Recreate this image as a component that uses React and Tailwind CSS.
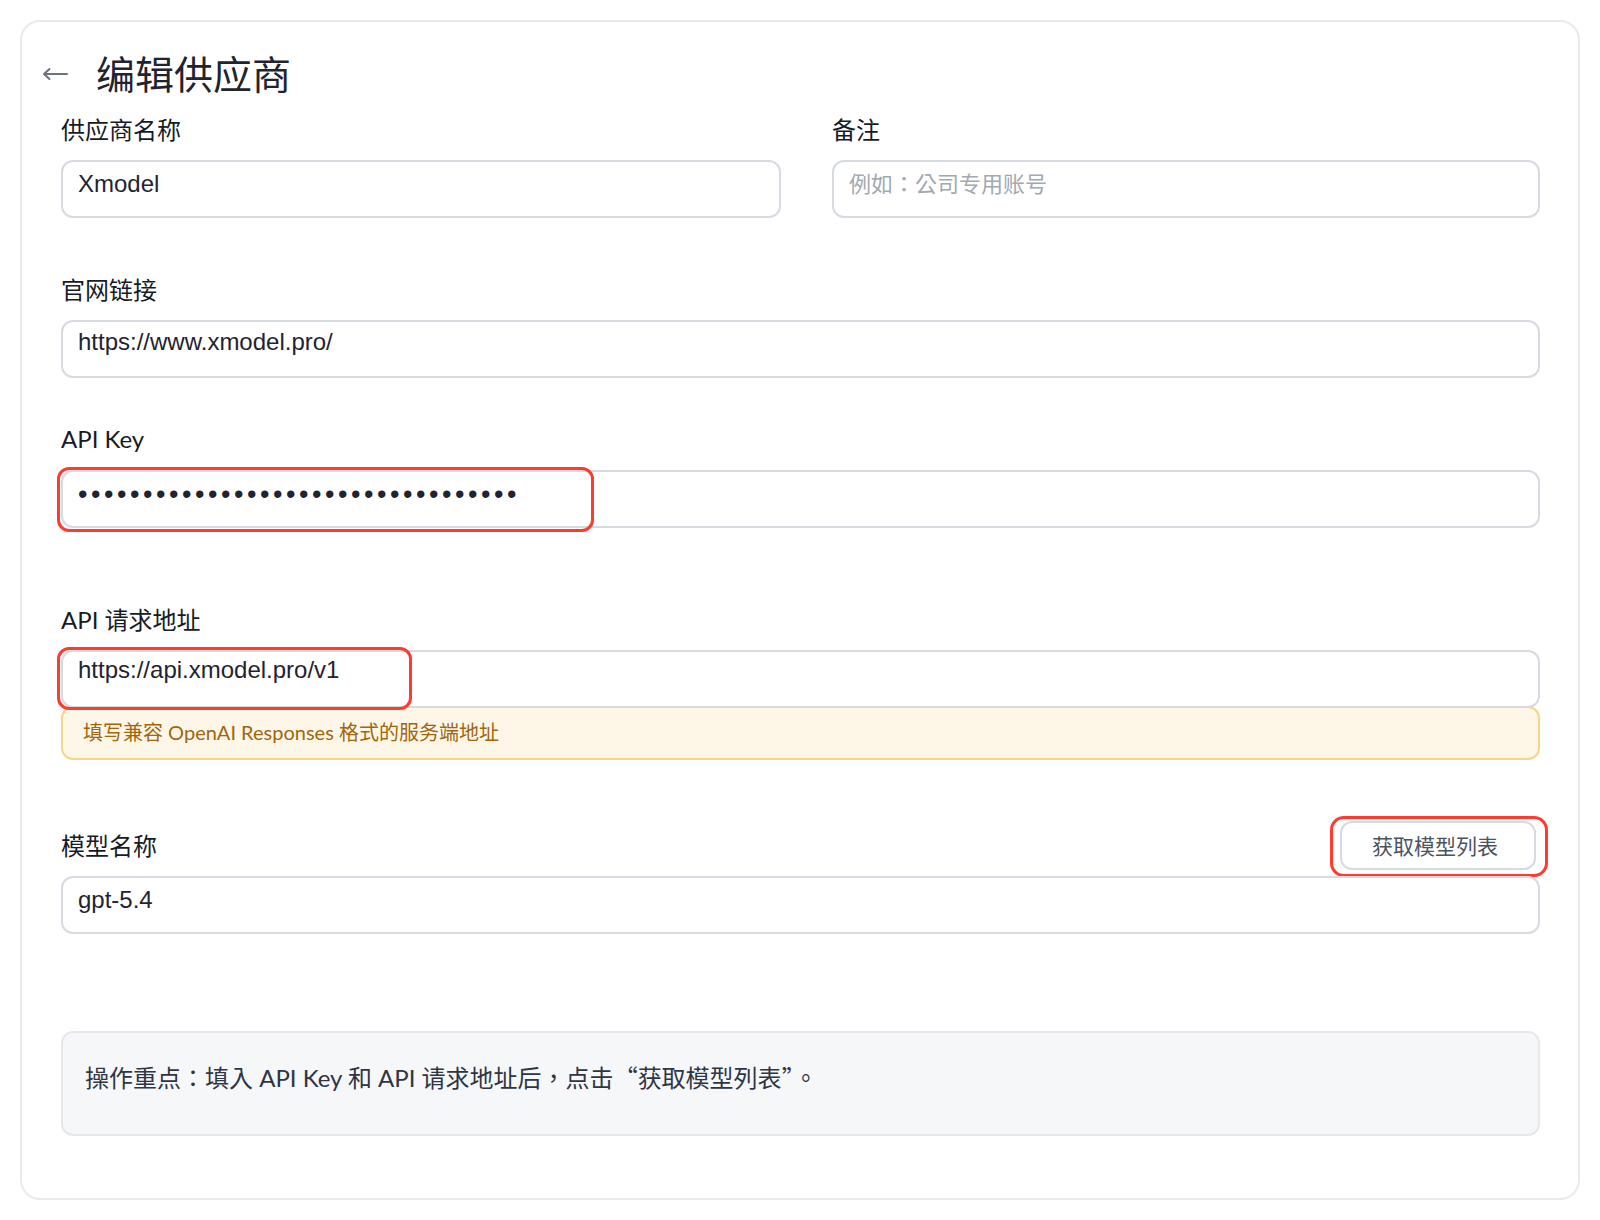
const ui = { fontFamily: 'Lato, "Noto Sans CJK SC", sans-serif' };
const uiTc = { fontFamily: 'Lato, "Noto Sans CJK TC", sans-serif' };
const cjkTc = { fontFamily: '"Noto Sans CJK TC", sans-serif' };
const mono = { fontFamily: '"Liberation Sans", "Noto Sans CJK SC", sans-serif' };

function Label({ children, className = '' }) {
    return (
        <div className={`h-8 leading-8 text-[24px] text-[#161b26] ${className}`} style={ui}>
            {children}
        </div>
    );
}

function Field({ value, placeholder, className = 'pt-[8px]', children }) {
    return (
        <div className={`relative h-[58px] rounded-[12px] border-2 border-[#d6dae1] bg-white px-[15px] ${className}`}>
            {value ? (
                <div className="text-[24px] leading-[28px] text-[#1f2430]" style={mono}>{value}</div>
            ) : (
                <div className="text-[22px] leading-[28px] text-[#a3a8b1]" style={uiTc}>{placeholder}</div>
            )}
            {children}
        </div>
    );
}

export default function App() {
    const dots = '•'.repeat(34);

    return (
        <div className="min-h-screen bg-white p-5">
            <div className="rounded-[20px] border-2 border-[#e8eaee] bg-white pt-[28px] pb-[62px]">
                {/* header */}
                <div className="flex h-12 items-center px-5">
                    <svg width="26" height="14" viewBox="0 0 26 14" className="text-[#6b7280]">
                        <path d="M25 7H2M7.5 2L2 7l5.5 5" fill="none" stroke="currentColor" strokeWidth="2" strokeLinecap="round" strokeLinejoin="round" />
                    </svg>
                    <h1 className="ml-[28px] text-[39px] leading-[48px] text-[#1f2430]" style={ui}>编辑供应商</h1>
                </div>

                <div className="pl-[39px] pr-[38px]">
                    {/* name + note */}
                    <div className="mt-[16px] grid grid-cols-[720px_1fr] gap-x-[51px]">
                        <div>
                            <Label className="mb-[14px]">供应商名称</Label>
                            <Field value="Xmodel" />
                        </div>
                        <div>
                            <Label className="mb-[14px]">备注</Label>
                            <Field placeholder="例如：公司专用账号" />
                        </div>
                    </div>

                    <Label className="mt-[56px] mb-[14px]">官网链接</Label>
                    <Field value="https://www.xmodel.pro/" className="pt-[6px]" />

                    <Label className="mt-[45px] mb-[15px]">API Key</Label>
                    <div className="relative">
                        <div className="h-[58px] rounded-[12px] border-2 border-[#d6dae1] bg-white px-[15px] pt-[7px]">
                            <div className="text-[27px] leading-[30px] tracking-[3.55px] text-[#1f2430]" style={mono}>{dots}</div>
                        </div>
                        <div className="pointer-events-none absolute -left-[4px] -top-[3px] h-[65px] w-[537px] rounded-[12px] border-[3px] border-[#ff3b30]" />
                    </div>

                    <Label className="mt-[76px] mb-[14px]">API 请求地址</Label>
                    <div className="relative">
                        <Field value="https://api.xmodel.pro/v1" className="pt-[4px]" />
                        <div className="pointer-events-none absolute -left-[4px] -top-[3px] h-[63px] w-[355px] rounded-[12px] border-[3px] border-[#ff3b30]" />
                    </div>
                    <div className="-mt-[2px] flex h-[54px] items-center rounded-[12px] border-2 border-[#f4d58c] bg-[#fef7e8] px-5 pb-[3px]">
                        <span className="text-[20px] text-[#a2650d]" style={ui}>填写兼容 OpenAI Responses 格式的服务端地址</span>
                    </div>

                    {/* model row */}
                    <div className="mt-[61px] mb-[6px] flex items-center justify-between">
                        <Label>模型名称</Label>
                        <div className="relative mr-1">
                            <button className="h-[49px] w-[196px] rounded-[12px] border-2 border-[#d6dae1] bg-white pr-[6px] text-[21px] text-[#4b5260]" style={ui}>
                                获取模型列表
                            </button>
                            <div className="pointer-events-none absolute -left-[10px] -top-[5px] h-[61px] w-[218px] rounded-[14px] border-[3px] border-[#ff3b30]" />
                        </div>
                    </div>
                    <Field value="gpt-5.4" />

                    <div className="mt-[97px] flex h-[105px] items-center rounded-[12px] border-2 border-[#e6e8ec] bg-[#f6f7f9] px-[22px] pb-[13px]">
                        <span className="text-[24px] text-[#2f3542]" style={uiTc}>
                            操作重点：填入 API Key 和 API 请求地址后，点击<span style={cjkTc}>“</span>获取模型列表<span style={cjkTc}>”</span>。
                        </span>
                    </div>
                </div>
            </div>
        </div>
    );
}
